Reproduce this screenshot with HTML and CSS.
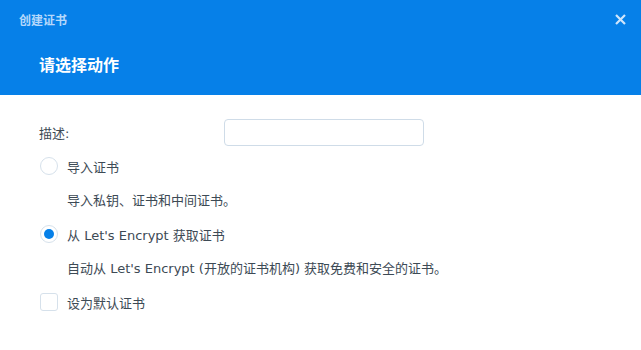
FILE: index.html
```html
<!DOCTYPE html>
<html lang="zh-CN">
<head>
  <meta charset="UTF-8" />
  <title>创建证书</title>
  <link rel="stylesheet" href="styles.css">
</head>
<body>
  <div class="dialog">
    <!-- Header -->
    <div class="header">
      <div class="title-bar">
        <div class="title">创建证书</div>
        <div class="close">
          <svg width="11" height="11" viewBox="0 0 11 11"><path d="M1 1 L10 10 M10 1 L1 10" stroke="#cfe5fb" stroke-width="2.2" stroke-linecap="butt"/></svg>
        </div>
      </div>
      <div class="subtitle">请选择动作</div>
    </div>
    <!-- Body -->
    <div class="content">
      <div class="field">
        <label class="field-label">描述:</label>
        <input type="text" class="text-input" />
      </div>
      <div class="option first">
        <span class="radio"></span>
        <span>导入证书</span>
      </div>
      <div class="desc">导入私钥、证书和中间证书。</div>
      <div class="option">
        <span class="radio checked"></span>
        <span>从 Let's Encrypt 获取证书</span>
      </div>
      <div class="desc">自动从 Let's Encrypt (开放的证书机构) 获取免费和安全的证书。</div>
      <div class="option">
        <span class="checkbox"></span>
        <span>设为默认证书</span>
      </div>
    </div>
  </div>
</body>
</html>
```

FILE: styles.css
```css
/* Global */
html, body {
  margin: 0;
  padding: 0;
  background: #fff;
  font-family: "DejaVu Sans", "Noto Sans CJK SC", sans-serif;
  color: #3d4a55;
}
.dialog {
  width: 641px;
  height: 350px;
  overflow: hidden;
}
/* Header */
.header {
  background: #0680e8;
  height: 95px;
  box-sizing: border-box;
  padding: 9px 0 0 19px;
}
.title-bar {
  display: flex;
  justify-content: space-between;
  align-items: center;
  height: 20px;
}
.title {
  font-size: 12px;
  font-weight: bold;
  color: #b5d8fb;
}
.close {
  width: 11px;
  height: 11px;
  margin-right: 15px;
  display: flex;
}
.subtitle {
  margin: 23px 0 0 20px;
  font-size: 16px;
  font-weight: bold;
  color: #fff;
}
/* Body */
.content {
  padding: 24px 0 0 40px;
  font-size: 13px;
}
.field {
  display: flex;
  align-items: center;
  height: 27px;
}
.field-label {
  width: 185px;
  margin-left: -1px;
}
.text-input {
  width: 200px;
  height: 27px;
  box-sizing: border-box;
  border: 1px solid #cfdce8;
  border-radius: 4px;
  outline: none;
  font-size: 13px;
}
.option {
  display: flex;
  align-items: center;
  gap: 9px;
  margin-top: 13px;
  height: 20px;
}
.option.first {
  margin-top: 10px;
}
.desc {
  margin: 15px 0 0 27px;
  height: 20px;
  line-height: 20px;
}
.radio {
  width: 18px;
  height: 18px;
  box-sizing: border-box;
  border: 1px solid #d6e1eb;
  border-radius: 50%;
  position: relative;
}
.radio.checked::after {
  content: "";
  position: absolute;
  left: 3px;
  top: 3px;
  width: 10px;
  height: 10px;
  border-radius: 50%;
  background: #0680e8;
}
.checkbox {
  width: 18px;
  height: 18px;
  box-sizing: border-box;
  border: 1px solid #d6e1eb;
  border-radius: 3px;
}
```
